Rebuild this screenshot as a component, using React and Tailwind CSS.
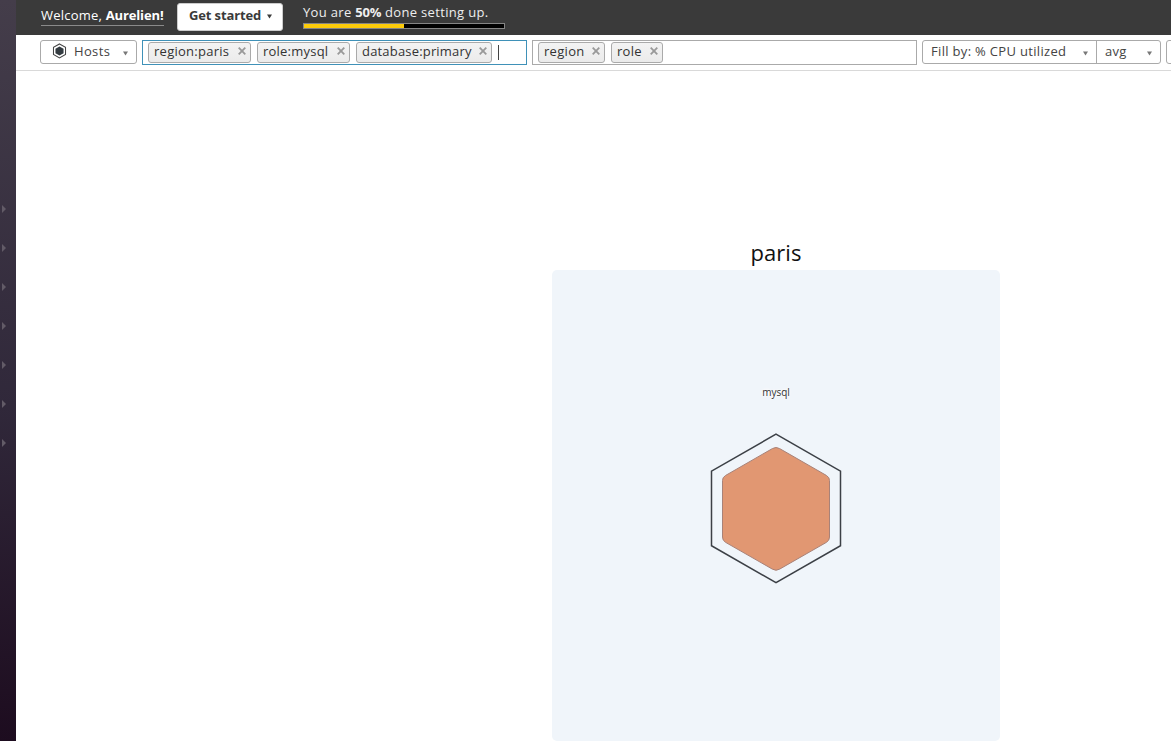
const ARROWS = ['nav-1', 'nav-2', 'nav-3', 'nav-4', 'nav-5', 'nav-6', 'nav-7'];

function Caret({ className }) {
  return (
    <svg viewBox="0 0 6 5" className={`h-[5px] w-[5px] shrink-0 fill-current ${className}`}>
      <path d="M0 0h6L3 5z" />
    </svg>
  );
}

function Tag({ label, width, spacing }) {
  return (
    <span
      className={`flex h-[21px] shrink-0 items-center justify-between rounded-[3px] border border-[#aaaaaa] bg-linear-to-b from-[#f3f3f3] to-[#ebebeb] pr-[4px] pl-[5px] ${width}`}
    >
      <span className={`relative -top-[2px] whitespace-nowrap text-[13px] leading-[18px] text-[#333333] ${spacing}`}>{label}</span>
      <svg viewBox="0 0 8 8" className="relative -top-[1.5px] h-[8px] w-[8px] shrink-0" fill="none" stroke="#999999" strokeWidth="1.8">
        <path d="M.7.7l6.6 6.6M7.3.7L.7 7.3" />
      </svg>
    </span>
  );
}

function Sidebar() {
  return (
    <aside className="flex w-[16px] shrink-0 flex-col gap-[31px] bg-linear-to-b from-[#443d4a] via-[#30283a] via-55% to-[#1d0c1f] pt-[205px] pl-[2px]">
      {ARROWS.map((id) => (
        <svg key={id} viewBox="0 0 4 8" className="h-[8px] w-[4px] fill-[#625b67]">
          <path d="M0 0l4 4-4 4z" />
        </svg>
      ))}
    </aside>
  );
}

function Header() {
  return (
    <header className="flex h-[35px] items-start bg-[#3a3a3a] pl-[25px]">
      <div className="mt-[6px] h-[20px] w-[123px] border-b border-[#8a8a8a] text-[13px] leading-[18px] whitespace-nowrap text-white">
        <span className="tracking-[0.22px]">Welcome, </span>
        <b className="tracking-[-0.13px]">Aurelien!</b>
      </div>
      <button className="mt-[3px] ml-[13px] flex h-[28px] w-[106px] items-center justify-between rounded-[3px] border border-[#cccccc] bg-white pr-[10px] pl-[11px] text-[#3a3a3a]">
        <b className="relative -top-px text-[13px] tracking-[-0.13px] whitespace-nowrap">Get started</b>
        <Caret className="relative -top-px" />
      </button>
      <div className="ml-[20px] w-[202px] pt-[3px]">
        <div className="h-[20px] text-[13px] leading-[18px] whitespace-nowrap text-[#eeeeee] tracking-[0.33px]">
          You are <b className="tracking-[-0.2px]">50%</b> done setting up.
        </div>
        <div className="h-[6px] border border-[#858585] bg-black">
          <div className="h-full w-1/2 bg-[#fccb0a]" />
        </div>
      </div>
    </header>
  );
}

function Toolbar() {
  return (
    <div className="flex h-[36px] items-start overflow-hidden border-b border-[#d9d9d9] pt-[5px] pl-[24px] text-[13px] text-[#444444]">
      <div className="flex h-[24px] w-[97px] shrink-0 items-center rounded-[3px] border border-[#aaaaaa] pl-[11px]">
        <svg viewBox="0 0 15 17" className="relative -top-px h-[16px] w-[15px]">
          <path d="M7.5 1l6.4 3.7v7.4L7.5 15.8 1.1 12.1V4.7z" fill="none" stroke="#444444" strokeWidth="1.1" />
          <path d="M7.5 3.7l4.3 2.4v4.8l-4.3 2.4-4.3-2.4V6.1z" fill="#333b40" />
        </svg>
        <span className="ml-[7px] w-[38px] tracking-[0.35px]">Hosts</span>
        <Caret className="mt-[2px] ml-[11px] text-[#777777]" />
      </div>
      <div className="ml-[5px] flex h-[25px] w-[385px] shrink-0 items-center gap-[6px] border border-[#3f91b8] pl-[5px]">
        <Tag label="region:paris" width="w-[103px]" spacing="tracking-[0.26px]" />
        <Tag label="role:mysql" width="w-[93px]" spacing="tracking-[0.22px]" />
        <Tag label="database:primary" width="w-[136px]" spacing="tracking-[0.18px]" />
        <span className="h-[15px] w-px bg-[#444444]" />
      </div>
      <div className="ml-[5px] flex h-[25px] w-[385px] shrink-0 items-center gap-[6px] border border-[#aaaaaa] pl-[5px]">
        <Tag label="region" width="w-[67px]" spacing="tracking-[0.3px]" />
        <Tag label="role" width="w-[52px]" spacing="tracking-[0.3px]" />
      </div>
      <div className="ml-[5px] flex h-[24px] w-[239px] shrink-0 rounded-[3px] border border-[#aaaaaa]">
        <div className="flex w-[174px] shrink-0 items-center justify-between border-r border-[#aaaaaa] pr-[8px] pl-[8px]">
          <span className="whitespace-nowrap tracking-[0.32px]">Fill by: % CPU utilized</span>
          <Caret className="mt-[2px] text-[#777777]" />
        </div>
        <div className="flex flex-1 items-center justify-between pr-[8px] pl-[8px]">
          <span className="tracking-[0.3px]">avg</span>
          <Caret className="mt-[2px] text-[#777777]" />
        </div>
      </div>
      <div className="ml-[5px] h-[24px] w-[40px] shrink-0 rounded-[3px] border border-[#aaaaaa]" />
    </div>
  );
}

function HostMap() {
  return (
    <main className="flex flex-1 flex-col pt-[165px] pl-[536px]">
      <section className="flex w-[448px] flex-1 flex-col items-center">
        <h2 className="h-[34px] text-[22px] leading-[33px] tracking-[0.1px] text-[#111111]">paris</h2>
        <div className="flex w-full flex-1 flex-col items-center rounded-[5px] bg-[#f0f5fa] pt-[115px]">
          <div className="h-[14px] text-[10px] leading-[14px] text-[#333333] [text-shadow:0_0_3px_#fff,0_0_3px_#fff,0_0_4px_#fff]">mysql</div>
          <svg viewBox="0 0 134 154" className="mt-[33px] h-[154px] w-[134px]">
            <path d="M67 2.2l64.5 37v74.5L67 150.700 2.500 113.700V39.200z" fill="none" stroke="#3c4046" strokeWidth="1.5" />
            <path
              d="M63.500 16.500Q67 14.500 70.500 16.500L117.500 43.500Q120.500 45.300 120.500 48.500V105Q120.500 108.500 117.500 110.300L70.500 137.200Q67 139.300 63.500 137.200L16.500 110.300Q13.500 108.500 13.500 105V48.500Q13.500 45.300 16.500 43.500Z"
              fill="#e19772"
              stroke="#a88278"
              strokeWidth="1"
            />
          </svg>
        </div>
      </section>
    </main>
  );
}

export default function App() {
  return (
    <div className="flex h-screen w-full overflow-hidden bg-white font-['Open_Sans','Noto_Sans',sans-serif]">
      <Sidebar />
      <div className="flex min-w-0 flex-1 flex-col">
        <Header />
        <Toolbar />
        <HostMap />
      </div>
    </div>
  );
}
